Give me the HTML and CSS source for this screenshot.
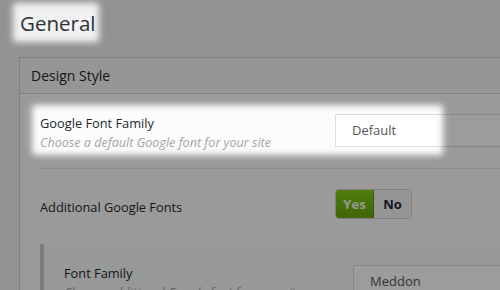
FILE: index.html
```html
<!DOCTYPE html>
<html lang="en">
<head>
    <meta charset="UTF-8">
    <meta name="viewport" content="width=device-width, initial-scale=1.0">
    <title>Theme Options - General</title>
    <link rel="stylesheet" href="styles.css">
</head>
<body>
<div class="wrap">
    <h1 class="page-title">General</h1>

    <div class="panel">
        <div class="panel-header">Design Style</div>

        <div class="panel-body">
            <div class="option-row has-divider">
                <div class="option-text">
                    <div class="option-label">Google Font Family</div>
                    <div class="option-desc">Choose a default Google font for your site</div>
                </div>
                <div class="select-box">Default</div>
            </div>

            <div class="option-row">
                <div class="option-text">
                    <div class="option-label toggle-label">Additional Google Fonts</div>
                </div>
                <div class="toggle">
                    <span class="toggle-btn active">Yes</span>
                    <span class="toggle-btn">No</span>
                </div>
            </div>

            <div class="sub-options">
                <div class="option-row sub-row">
                    <div class="option-text">
                        <div class="option-label">Font Family</div>
                        <div class="option-desc">Choose additional Google font for your site</div>
                    </div>
                    <div class="select-box">Meddon</div>
                </div>
            </div>
        </div>
    </div>
</div>

<!-- tour overlay: dims the page, leaves two soft spotlights open -->
<svg class="tour-overlay" width="500" height="290" viewBox="0 0 500 290">
    <defs>
        <filter id="soft-edge" x="-20%" y="-20%" width="140%" height="140%">
            <feGaussianBlur stdDeviation="3"/>
        </filter>
        <mask id="spotlights">
            <rect width="500" height="290" fill="#fff"/>
            <g filter="url(#soft-edge)" fill="#000">
                <rect x="13" y="3" width="86" height="39" rx="3"/>
                <rect x="32" y="105" width="411" height="50" rx="3"/>
            </g>
        </mask>
    </defs>
    <rect width="500" height="290" fill="rgba(0,0,0,0.39)" mask="url(#spotlights)"/>
</svg>
</body>
</html>
```

FILE: styles.css
```css
/* theme options page */
body {
    margin: 0;
    font-family: "Open Sans", "Noto Sans", Arial, sans-serif;
    background-color: #f1f1f1;
    color: #23282d;
    overflow: hidden;
}

.wrap {
    padding-left: 14px;
    width: 900px;
}

.page-title {
    display: inline-block;
    margin: 5px 0 0;
    padding: 2px 6px;
    font-size: 20.5px;
    font-weight: 400;
    line-height: 32px;
    color: #2b323a;
}

.panel {
    margin: 16px 0 0 5px;
    background: #fcfcfc;
    border: 1px solid #d2d2d2;
}

.panel-header {
    height: 35px;
    line-height: 35px;
    padding-left: 11px;
    font-size: 14px;
    background: #f6f6f6;
    border-bottom: 1px solid #d2d2d2;
}

.panel-body {
    padding: 0 20px;
}

.option-row {
    display: grid;
    grid-template-columns: 295px 1fr;
    align-items: start;
    padding: 20px 0 25px;
}

.has-divider {
    padding-bottom: 16px;
    border-bottom: 1px solid #e2e2e2;
}

.option-label {
    font-size: 12.8px;
    line-height: 18px;
}

.toggle-label {
    padding-top: 9px;
}

.option-desc {
    margin-top: 2px;
    font-size: 12.6px;
    font-style: italic;
    line-height: 18px;
    color: #a0a5aa;
}

.select-box {
    width: 300px;
    height: 31px;
    line-height: 31px;
    padding-left: 16px;
    font-size: 13px;
    color: #555;
    background: #fff;
    border: 1px solid #ddd;
}

.toggle {
    display: flex;
    width: 75px;
    height: 28px;
    border: 1px solid #d0d0d0;
    border-radius: 4px;
    overflow: hidden;
}

.toggle-btn {
    flex: 1;
    text-align: center;
    line-height: 28px;
    font-size: 13px;
    font-weight: 700;
    color: #1f2a36;
    background: #f4f4f4;
}

.toggle-btn.active {
    color: #f4f7ee;
    background: linear-gradient(#84cd17, #69a60c);
    border-right: 1px solid #5d8f0b;
}

.sub-options {
    background: #f7f8f8;
    border-left: 4px solid #cbcbcb;
    padding-left: 20px;
}

.sub-row {
    grid-template-columns: 289px 1fr;
}

.sub-row .select-box {
    margin-top: 1px;
}

/* tour overlay */
.tour-overlay {
    position: fixed;
    top: 0;
    left: 0;
    pointer-events: none;
}
```
